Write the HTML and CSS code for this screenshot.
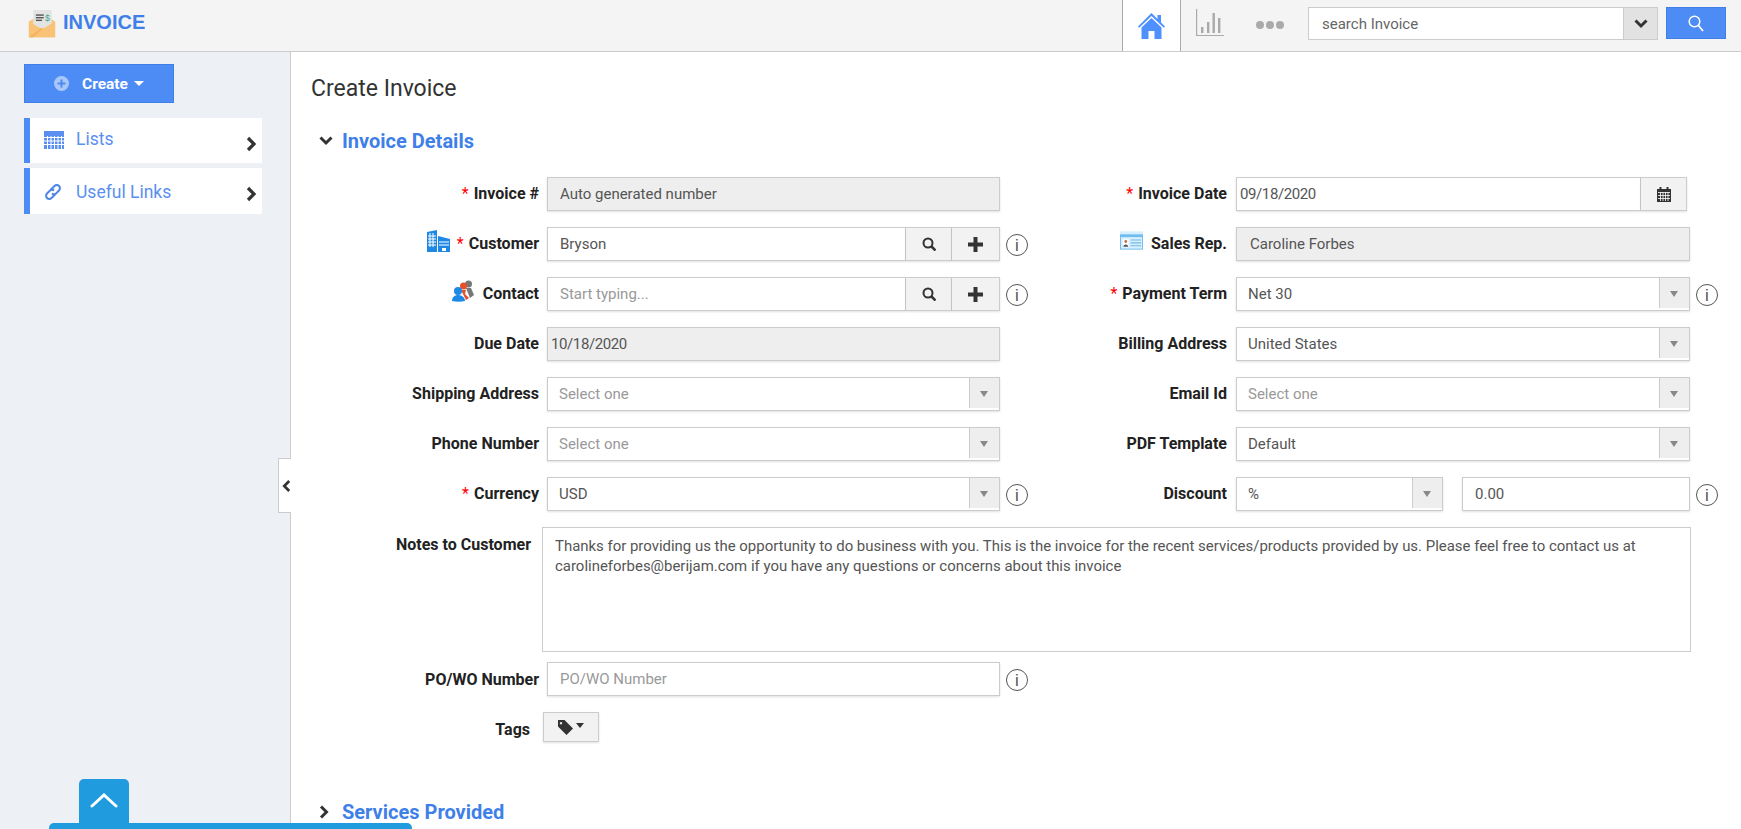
FILE: index.html
```html
<!DOCTYPE html>
<html>

<head>
    <meta charset="utf-8">
    <title>Create Invoice</title>
    <link rel="stylesheet" href="styles.css">
</head>

<body>
    <div class="TopBar">
        <div class="Brand">
            <svg class="BrandIcon" viewBox="0 0 32 32">
                <path fill="#fbc67a" d="M1 13 16 4l15 9v18H1z" />
                <rect x="6" y="0" width="21" height="21" fill="#e3e3e3" />
                <rect x="9" y="5" width="9" height="1.6" fill="#555" />
                <rect x="9" y="8" width="9" height="1.6" fill="#555" />
                <rect x="9" y="11" width="7" height="1.6" fill="#555" />
                <text x="19.500" y="12" font-size="10" font-family="Liberation Sans" fill="#3cab8e">$</text>
                <path fill="#f8c377" d="M1 13 16 22l15-9v18H1z" />
                <path fill="#f4b25e" d="M1 31 16 20l1 1L6 31z" />
            </svg>
            <span class="BrandName">INVOICE</span>
        </div>
        <div class="TopRight">
            <div class="HomeTab">
                <svg width="27" height="26" viewBox="0 0 27 26">
                    <path fill="#4d90fe" d="M13.5 0 0 13.5l1.2 1.3L13.5 3l12.3 11.8 1.2-1.3-4-4V2h-3.500v4z" />
                    <path fill="#4d90fe" d="M13.500 5 3.500 14.500V26h7v-8h6v8h7V14.500z" />
                </svg>
            </div>
            <svg class="TopIcon" width="28" height="28" viewBox="0 0 28 28">
                <path fill="none" stroke="#aaa" stroke-width="1.200" d="M.6 0v26.500H28" />
                <path fill="#aaa" d="M5 18h2.400v6H5zM11 13h2.400v11H11zM16.500 4h2.400v20h-2.400zM22 9h2.400v15H22z" />
            </svg>
            <div class="Dots"><i></i><i></i><i></i></div>
            <div class="SearchBox">
                <div class="SearchText">search Invoice</div>
                <div class="SearchDrop">
                    <svg width="14" height="10" viewBox="0 0 14 10">
                        <path fill="none" stroke="#333" stroke-width="3" d="M1.500 1.500 7 7l5.500-5.500" />
                    </svg>
                </div>
            </div>
            <div class="SearchBtn">
                <svg width="16" height="17" viewBox="0 0 16 17">
                    <circle cx="6.500" cy="6.500" r="5.300" fill="none" stroke="#fff" stroke-width="1.500" />
                    <path stroke="#fff" stroke-width="1.800" d="m10.500 10.500 4.500 5.500" />
                </svg>
            </div>
        </div>
    </div>

    <div class="Page">
        <div class="Side">
            <div class="CreateBtn">
                <svg width="15" height="15" viewBox="0 0 15 15">
                    <circle cx="7.500" cy="7.500" r="7.500" fill="#a9c7fb" />
                    <path fill="#4d8bf0" d="M6.500 3.500h2v3h3v2h-3v3h-2v-3h-3v-2h3z" />
                </svg>
                <span class="CreateText">Create</span>
                <span class="CaretWhite"></span>
            </div>
            <div class="SideItem SideLists">
                <svg class="SideIcon" width="20" height="18" viewBox="0 0 20 18">
                    <rect width="20" height="18" fill="#5a8ff0" />
                    <path stroke="#fff" stroke-width="1" d="M0 6.500h20M0 10h20M0 13.500h20M3.500 5v13M7 5v13M10.500 5v13M14 5v13M17.500 5v13" />
                </svg>
                <span class="SideText">Lists</span>
                <svg class="SideArrow" width="11" height="16" viewBox="0 0 11 16">
                    <path fill="none" stroke="#333" stroke-width="3.200" d="m2 2 6 6-6 6" />
                </svg>
            </div>
            <div class="SideItem SideLinks">
                <svg class="SideIcon" width="20" height="18" viewBox="0 0 20 18">
                    <g fill="none" stroke="#4d85e6" stroke-width="2">
                        <path d="M8 6.500 11.500 3a3 3 0 0 1 4.500 4.500L13 10.500a3 3 0 0 1-4 0" />
                        <path d="M12 11.500 8.500 15A3 3 0 0 1 4 10.500L7 7.500a3 3 0 0 1 4 0" />
                    </g>
                </svg>
                <span class="SideText">Useful Links</span>
                <svg class="SideArrow" width="11" height="16" viewBox="0 0 11 16">
                    <path fill="none" stroke="#333" stroke-width="3.200" d="m2 2 6 6-6 6" />
                </svg>
            </div>
            <div class="Toggle">
                <svg width="10" height="14" viewBox="0 0 10 14">
                    <path fill="none" stroke="#333" stroke-width="3" d="M8 1.500 2.500 7 8 12.500" />
                </svg>
            </div>
            <div class="UpTab">
                <svg width="28" height="16" viewBox="0 0 28 16">
                    <path fill="none" stroke="#fff" stroke-width="3" stroke-linecap="round" d="M2 14 14 3l12 11" />
                </svg>
            </div>
            <div class="UpBar"></div>
        </div>

        <div class="Main">
            <div class="Title">Create Invoice</div>
            <div class="Section">
                <svg width="14" height="10" viewBox="0 0 14 10">
                    <path fill="none" stroke="#333" stroke-width="3" d="M1.500 1.500 7 7l5.500-5.500" />
                </svg>
                <span class="SectionName">Invoice Details</span>
            </div>

            <div class="Form">
                <div class="Label"><b class="Req">*</b>Invoice #</div>
                <div class="Field Off Pad">Auto generated number</div>
                <div></div>
                <div class="Label RightLabel"><b class="Req">*</b>Invoice Date</div>
                <div class="Group Short">
                    <div class="Field Grow Date">09/18/2020</div>
                    <div class="Addon Cal">
                        <svg width="14" height="15" viewBox="0 0 14 15">
                            <path fill="#333" d="M0 2h2.500V0h2v2h5V0h2v2H14v13H0z" />
                            <path stroke="#fff" stroke-width=".8" d="M1 5.500h12M1 8.500h12M1 11.500h12M3.500 5v9M6 5v9M8.500 5v9M11 5v9" />
                        </svg>
                    </div>
                </div>
                <div></div>

                <div class="Label">
                    <svg class="LabelIcon Building" width="24" height="22" viewBox="0 0 24 22">
                        <path fill="#1e88e5" d="M1 2 11 0v22H1zM12 6l12 3v13H12z" />
                        <path stroke="#fff" stroke-width="1" d="M2 6h8M2 9h8M2 12h8M2 15h8M4 3v14M7 3v14M13 12h10M13 15h10" />
                        <rect x="16" y="18" width="4" height="3" fill="#fff" />
                    </svg>
                    <b class="Req">*</b>Customer
                </div>
                <div class="Group">
                    <div class="Field Grow Pad">Bryson</div>
                    <div class="Addon Look">
                        <svg width="14" height="14" viewBox="0 0 14 14">
                            <circle cx="6" cy="6" r="4.500" fill="none" stroke="#333" stroke-width="2" />
                            <path stroke="#333" stroke-width="2.500" d="m9 9 4.500 4.500" />
                        </svg>
                    </div>
                    <div class="Addon Plus">
                        <svg width="15" height="15" viewBox="0 0 15 15">
                            <path fill="#333" d="M5.500 0h4v5.500H15v4H9.500V15h-4V9.500H0v-4h5.500z" />
                        </svg>
                    </div>
                </div>
                <div class="Info">i</div>
                <div class="Label RightLabel">
                    <svg class="LabelIcon Card" width="24" height="19" viewBox="0 0 24 19">
                        <rect width="24" height="3" fill="#d5effc" />
                        <rect y="3" width="24" height="16" fill="#6fbcf0" />
                        <rect x="1" y="6" width="22" height="12" fill="#d8effc" />
                        <rect x="3" y="8" width="6" height="8" fill="#fff" />
                        <circle cx="6" cy="10.500" r="1.500" fill="#c0704a" />
                        <path fill="#555" d="M3.500 16c0-3 5-3 5 0z" />
                        <path stroke="#6db9ec" stroke-width="1.200" d="M11 9h11M11 12h11M11 15h11" />
                    </svg>
                    Sales Rep.
                </div>
                <div class="Field Off PadWide">Caroline Forbes</div>
                <div></div>

                <div class="Label">
                    <svg class="LabelIcon People" width="22" height="22" viewBox="0 0 22 22">
                        <circle cx="16.500" cy="4" r="3.500" fill="#777" />
                        <path fill="#777" d="M14 8h5l3 7-4 3z" />
                        <circle cx="11.500" cy="6" r="3.500" fill="#e8502a" />
                        <path fill="#e8502a" d="M9 10h5l-1 4 4 4-3 2z" />
                        <circle cx="6" cy="11" r="4" fill="#1e88e5" />
                        <path fill="#1e88e5" d="M0 21c0-4 3-6 6-6s7 2 7 6c-4 1-9 1-13 0z" />
                    </svg>
                    Contact
                </div>
                <div class="Group">
                    <div class="Field Grow Pad Hint">Start typing...</div>
                    <div class="Addon Look">
                        <svg width="14" height="14" viewBox="0 0 14 14">
                            <circle cx="6" cy="6" r="4.500" fill="none" stroke="#333" stroke-width="2" />
                            <path stroke="#333" stroke-width="2.500" d="m9 9 4.500 4.500" />
                        </svg>
                    </div>
                    <div class="Addon Plus">
                        <svg width="15" height="15" viewBox="0 0 15 15">
                            <path fill="#333" d="M5.500 0h4v5.500H15v4H9.500V15h-4V9.500H0v-4h5.500z" />
                        </svg>
                    </div>
                </div>
                <div class="Info">i</div>
                <div class="Label RightLabel"><b class="Req">*</b>Payment Term</div>
                <div class="Field Select">Net 30<span class="Drop"></span></div>
                <div class="Info">i</div>

                <div class="Label">Due Date</div>
                <div class="Field Off Date">10/18/2020</div>
                <div></div>
                <div class="Label RightLabel">Billing Address</div>
                <div class="Field Select">United States<span class="Drop"></span></div>
                <div></div>

                <div class="Label">Shipping Address</div>
                <div class="Field Select Hint">Select one<span class="Drop"></span></div>
                <div></div>
                <div class="Label RightLabel">Email Id</div>
                <div class="Field Select Hint">Select one<span class="Drop"></span></div>
                <div></div>

                <div class="Label">Phone Number</div>
                <div class="Field Select Hint">Select one<span class="Drop"></span></div>
                <div></div>
                <div class="Label RightLabel">PDF Template</div>
                <div class="Field Select">Default<span class="Drop"></span></div>
                <div></div>

                <div class="Label"><b class="Req">*</b>Currency</div>
                <div class="Field Select">USD<span class="Drop"></span></div>
                <div class="Info">i</div>
                <div class="Label RightLabel">Discount</div>
                <div class="Pair">
                    <div class="Field Select">%<span class="Drop"></span></div>
                    <div class="Field Pad">0.00</div>
                </div>
                <div class="Info">i</div>

                <div class="Label NotesLabel">Notes to Customer</div>
                <div class="Notes">Thanks for providing us the opportunity to do business with you. This is the invoice for the recent services/products provided by us. Please feel free to contact us at carolineforbes@berijam.com if you have any questions or concerns about this invoice</div>

                <div class="Label FirstCol">PO/WO Number</div>
                <div class="Field Pad Hint">PO/WO Number</div>
                <div class="Info">i</div>

                <div class="Label FirstCol TagsLabel">Tags</div>
                <div class="TagsCell">
                    <div class="TagsBtn">
                        <svg width="15" height="15" viewBox="0 0 15 15">
                            <path fill="#333" d="M0 0h6.500L15 8.500 8.500 15 0 6.500zM3 2a1.200 1.200 0 1 0 .01 0z" fill-rule="evenodd" />
                        </svg>
                        <span class="CaretDark"></span>
                    </div>
                </div>
            </div>

            <div class="Section Lower">
                <svg width="10" height="14" viewBox="0 0 10 14">
                    <path fill="none" stroke="#333" stroke-width="3" d="m2 1.500 5.500 5.500L2 12.500" />
                </svg>
                <span class="SectionName">Services Provided</span>
            </div>
        </div>
    </div>
</body>

</html>
```

FILE: styles.css
```css
* {
    box-sizing: border-box;
}

html,
body {
    height: 100%;
}

body {
    margin: 0;
    overflow: hidden;
    background-color: white;
    color: #333;
    font-family: Roboto, "Liberation Sans", sans-serif;
    font-size: 15px;
}

.TopBar {
    display: flex;
    align-items: stretch;
    justify-content: space-between;
    height: 52px;
    background-color: #f4f4f4;
    border-bottom: 1px solid #ccc;
}

.Brand {
    display: flex;
    align-items: flex-start;
    padding: 10px 0 0 28px;
}

.BrandIcon {
    width: 28px;
    height: 28px;
}

.BrandName {
    margin: 0 0 0 7px;
    color: #3f7fe8;
    font-family: "Liberation Sans", sans-serif;
    font-size: 20px;
    font-weight: bold;
    line-height: 24px;
}

.TopRight {
    display: flex;
    align-items: flex-start;
    padding-right: 15px;
}

.HomeTab {
    display: flex;
    align-items: center;
    justify-content: center;
    width: 59px;
    height: 51px;
    background-color: white;
    border-left: 1px solid #aaa;
    border-right: 1px solid #aaa;
}

.TopIcon {
    margin: 9px 0 0 15px;
}

.Dots {
    display: flex;
    gap: 2px;
    margin: 21px 0 0 32px;
}

.Dots i {
    width: 8px;
    height: 8px;
    border-radius: 50%;
    background-color: #aaa;
}

.SearchBox {
    display: flex;
    width: 350px;
    height: 33px;
    margin: 7px 0 0 24px;
    background-color: white;
    border: 1px solid #ccc;
}

.SearchText {
    flex: 1;
    padding-left: 13px;
    color: #666;
    font-size: 15px;
    line-height: 32px;
}

.SearchDrop {
    display: flex;
    align-items: center;
    justify-content: center;
    width: 34px;
    background-color: #e2e2e2;
    border-left: 1px solid #ccc;
}

.SearchBtn {
    display: flex;
    align-items: center;
    justify-content: center;
    width: 60px;
    height: 32px;
    margin: 7px 0 0 8px;
    background-color: #4d8bf5;
    border: 1px solid #3f7fe8;
}

.Page {
    display: flex;
    height: calc(100% - 52px);
}

.Side {
    position: relative;
    flex: none;
    width: 291px;
    padding: 12px 0 0 24px;
    background-color: #edf0f5;
    border-right: 1px solid #ccc;
}

.CreateBtn {
    display: flex;
    align-items: center;
    width: 150px;
    height: 39px;
    padding-left: 29px;
    margin-bottom: 15px;
    background-color: #4d8bf5;
    border: 1px solid #3f7fe8;
}

.CreateText {
    margin-left: 13px;
    color: white;
    font-size: 15.5px;
    font-weight: bold;
}

.CaretWhite {
    margin-left: 6px;
    border-top: 5px solid white;
    border-left: 5px solid transparent;
    border-right: 5px solid transparent;
}

.SideItem {
    display: flex;
    align-items: center;
    width: 238px;
    height: 46px;
    margin-bottom: 5px;
    background-color: white;
    border-left: 6px solid #4d8bf5;
}

.SideLists {
    height: 45px;
}

.SideIcon {
    margin: 0 0 2px 14px;
}

.SideText {
    margin: 0 0 4px 12px;
    color: #5a8ff0;
    font-size: 17.5px;
}

.SideLinks .SideIcon {
    margin: 2px 0 0 13px;
}

.SideLinks .SideText {
    margin: 2px 0 0 13px;
}

.SideArrow {
    margin: 6px 5px 0 auto;
}

.Toggle {
    position: absolute;
    top: 406px;
    right: -1px;
    display: flex;
    align-items: center;
    justify-content: center;
    width: 13px;
    height: 55px;
    padding-left: 3px;
    background-color: white;
    border: 1px solid #ccc;
    border-right: none;
}

.UpTab {
    position: absolute;
    left: 79px;
    bottom: 6px;
    display: flex;
    justify-content: center;
    width: 50px;
    height: 44px;
    padding-top: 13px;
    background-color: #1f9bde;
    border-radius: 5px 5px 0 0;
}

.UpBar {
    position: absolute;
    left: 49px;
    bottom: 0;
    z-index: 2;
    width: 363px;
    height: 6px;
    background-color: #1f9bde;
    border-radius: 5px 5px 0 0;
}

.Main {
    flex: 1;
    padding: 0 0 0 20px;
}

.Title {
    padding-top: 22px;
    color: #333;
    font-size: 23px;
    line-height: 30px;
}

.Section {
    display: flex;
    align-items: center;
    gap: 9px;
    height: 24px;
    margin: 25px 0 0 8px;
}

.Lower {
    gap: 13px;
    margin-top: 58px;
}

.SectionName {
    color: #3f7fe8;
    font-size: 20px;
    font-weight: bold;
}

.Form {
    display: grid;
    grid-template-columns: 235px 453px 34px 202px 454px 34px;
    row-gap: 16px;
    margin: 24px 0 0 1px;
}

.Label {
    display: flex;
    align-items: center;
    justify-content: flex-end;
    padding: 0 8px 2px 0;
    color: #222;
    font-size: 16px;
    font-weight: bold;
    white-space: nowrap;
}

.RightLabel {
    padding-right: 9px;
}

.FirstCol {
    grid-column: 1;
    padding-bottom: 0;
}

.LabelIcon {
    margin-right: 5px;
    margin-bottom: 4px;
}

.Building {
    margin-right: 7px;
}

.People {
    margin-right: 9px;
}

.Card {
    width: 23px;
    margin-right: 8px;
    margin-bottom: 6px;
}

.Req {
    margin-right: 5px;
    color: red;
    font-weight: normal;
}

.Field {
    display: flex;
    align-items: center;
    padding-left: 3px;
    height: 34px;
    background-color: white;
    border: 1px solid #ccc;
    box-shadow: 0 1px 2px rgba(0, 0, 0, 0.12);
    color: #555;
    white-space: nowrap;
}

.Off {
    background-color: #eee;
}

.Pad {
    padding-left: 12px;
}

.PadWide {
    padding-left: 13px;
}

.Hint {
    color: #999;
}

.Date {
    letter-spacing: -0.4px;
}

.Grow {
    flex: 1;
}

.Group {
    display: flex;
}

.Short {
    width: 451px;
}

.Addon {
    display: flex;
    align-items: center;
    justify-content: center;
    height: 34px;
    background-color: #f2f2f2;
    border: 1px solid #ccc;
    border-left: none;
    box-shadow: 0 1px 2px rgba(0, 0, 0, 0.12);
}

.Look {
    width: 46px;
}

.Plus {
    width: 48px;
}

.Cal {
    width: 46px;
}

.Select {
    position: relative;
    padding-left: 11px;
}

.Drop {
    position: absolute;
    top: 0;
    right: 0;
    width: 30px;
    height: 30px;
    background-color: #eee;
    border-left: 1px solid #ccc;
}

.Drop::after {
    content: "";
    position: absolute;
    top: 13px;
    left: 10px;
    border-top: 6px solid #888;
    border-left: 4px solid transparent;
    border-right: 4px solid transparent;
}

.Info {
    display: flex;
    align-items: center;
    justify-content: center;
    width: 22px;
    height: 22px;
    margin: 7px 0 0 6px;
    border: 1.5px solid #555;
    border-radius: 50%;
    color: #555;
    font-family: "Liberation Sans", sans-serif;
    font-size: 17px;
    line-height: 1;
}

.Pair {
    display: grid;
    grid-template-columns: 207px 228px;
    column-gap: 19px;
}

.NotesLabel {
    grid-column: 1;
    align-items: flex-start;
    padding: 8px 16px 0 0;
}

.Notes {
    grid-column: 2 / 7;
    height: 125px;
    margin: 0 33px -6px -5px;
    padding: 8px 12px;
    border: 1px solid #ccc;
    color: #555;
    font-size: 14.95px;
    line-height: 20px;
}

.TagsLabel {
    padding: 4px 17px 0 0;
}

.TagsCell {
    display: flex;
}

.TagsBtn {
    display: flex;
    align-items: center;
    justify-content: center;
    gap: 3px;
    width: 56px;
    height: 30px;
    margin-left: -4px;
    background-color: #f2f2f2;
    border: 1px solid #ccc;
    box-shadow: 0 1px 2px rgba(0, 0, 0, 0.12);
}

.CaretDark {
    margin-bottom: 4px;
    border-top: 5px solid #333;
    border-left: 4px solid transparent;
    border-right: 4px solid transparent;
}
```
